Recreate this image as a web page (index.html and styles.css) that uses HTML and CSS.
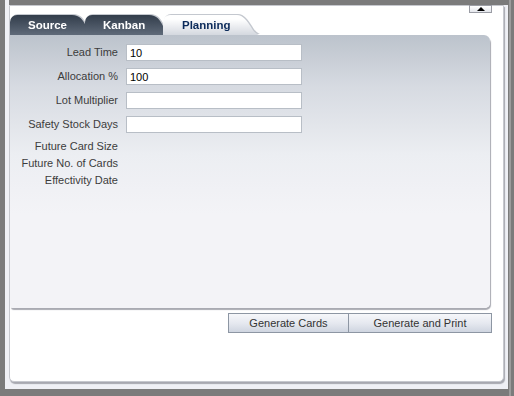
FILE: index.html
```html
<!DOCTYPE html>
<html lang="en">
<head>
    <meta charset="UTF-8">
    <title>Kanban Planning</title>
    <link rel="stylesheet" href="styles.css">
</head>
<body>
    <div class="frame">
        <div class="window">
            <div class="topbar">
                <button class="collapse" title="Collapse"><span class="arrow"></span></button>
            </div>
            <div class="tabs">
                <div class="tab tab-source">Source</div>
                <div class="tab tab-kanban">Kanban</div>
                <div class="tab tab-planning">Planning</div>
            </div>
            <div class="panel">
                <div class="fields">
                    <label for="lead-time">Lead Time</label>
                    <input type="text" id="lead-time" value="10">
                    <label for="allocation">Allocation %</label>
                    <input type="text" id="allocation" value="100" class="focused">
                    <label for="lot-multiplier">Lot Multiplier</label>
                    <input type="text" id="lot-multiplier">
                    <label for="safety-stock">Safety Stock Days</label>
                    <input type="text" id="safety-stock">
                </div>
                <div class="info">
                    <span>Future Card Size</span>
                    <span>Future No. of Cards</span>
                    <span>Effectivity Date</span>
                </div>
            </div>
            <div class="actions">
                <button class="btn btn-cards">Generate Cards</button>
                <button class="btn btn-print">Generate and Print</button>
            </div>
        </div>
    </div>
</body>
</html>
```

FILE: styles.css
```css
body {
    margin: 0;
    height: 396px;
    overflow: hidden;
    font-family: "Liberation Sans", Arial, sans-serif;
    font-size: 11px;
    color: #3c3c3c;
    background: linear-gradient(to right, #7b7b7b 509px, #9c9c9c 509px, #9c9c9c 511px, #7b7b7b 511px);
}
.frame {
    margin-left: 5px;
    width: 503px;
    height: 389px;
    box-sizing: border-box;
    padding: 5px 0 0 4px;
    background: linear-gradient(#7b7b7b, #7b7b7b) no-repeat 4px 0 / 100% 5px, #eff0f5;
}
.window {
    width: 495px;
    height: 377px;
    box-sizing: border-box;
    background: white;
    border: 1px solid #c6c8ce;
    border-radius: 0 0 5px 5px;
    box-shadow: 1px 2px 1px #a7a8b0;
}
.topbar {
    height: 9px;
    display: flex;
    justify-content: flex-end;
    padding-right: 11px;
}
.collapse {
    width: 23px;
    height: 8px;
    margin-top: -1px;
    padding: 0;
    border: 1px solid #9a9ca4;
    background: linear-gradient(#ffffff, #e4e6ec);
    display: flex;
    justify-content: center;
    align-items: center;
}
.arrow {
    width: 0;
    height: 0;
    border-left: 4px solid transparent;
    border-right: 4px solid transparent;
    border-bottom: 4px solid #000;
}
.tabs {
    display: flex;
    height: 20px;
    filter: drop-shadow(1px -1px 0 #c4c8cf);
}
.tab {
    height: 20px;
    box-sizing: border-box;
    padding-left: 18px;
    line-height: 21px;
    font-weight: bold;
    font-size: 11.5px;
    border-top-left-radius: 7px;
}
.tab-source {
    width: 80px;
    color: white;
    background: linear-gradient(#323d4b, #5f6a79);
    clip-path: path('M0 20 L0 0 L62 0 C70 0 73 5 76 11 C78 16 79 19 80 20 Z');
}
.tab-kanban {
    width: 82px;
    margin-left: -5px;
    color: white;
    background: linear-gradient(#323d4b, #5f6a79);
    clip-path: path('M0 20 L0 0 L64 0 C72 0 75 5 78 11 C80 16 81 19 82 20 Z');
}
.tab-planning {
    width: 96px;
    margin-left: -4px;
    padding-left: 19px;
    color: #0b2a5a;
    background: linear-gradient(#ffffff 20%, #d4d8df);
    clip-path: path('M0 20 L0 0 L74 0 C80 0 84 6 88 12 C91 17 93 19 96 20 Z');
}
.panel {
    width: 480px;
    height: 273px;
    box-sizing: border-box;
    padding-top: 9px;
    border-radius: 0 6px 5px 3px;
    background: linear-gradient(#bcc3cc 0, #d6dae1 50px, #eceef2 120px, #f3f3f7 180px);
    box-shadow: 1px 2px 1px #a9aab2;
}
.fields {
    display: grid;
    grid-template-columns: 108px 176px;
    column-gap: 8px;
    row-gap: 7px;
}
.fields label,
.info span {
    text-align: right;
    line-height: 17px;
}
input {
    height: 17px;
    box-sizing: border-box;
    border: 1px solid #b8bec6;
    padding: 0 3px;
    font-family: "Liberation Sans", Arial, sans-serif;
    font-size: 11px;
    color: #000;
    background: white;
}
input:focus {
    outline: none;
}
.info {
    display: grid;
    grid-template-columns: 108px;
    margin-top: 5px;
}
.actions {
    display: flex;
    justify-content: flex-end;
    padding-right: 11px;
    margin-top: 5px;
}
.btn {
    height: 20px;
    padding: 0;
    border: 1px solid #8d96a3;
    background: linear-gradient(#f6f7fa, #e6e9f0 50%, #cfd5e0);
    font-family: "Liberation Sans", Arial, sans-serif;
    font-size: 11px;
    color: #333;
}
.btn-cards {
    width: 121px;
}
.btn-print {
    width: 144px;
    margin-left: -1px;
}
```
